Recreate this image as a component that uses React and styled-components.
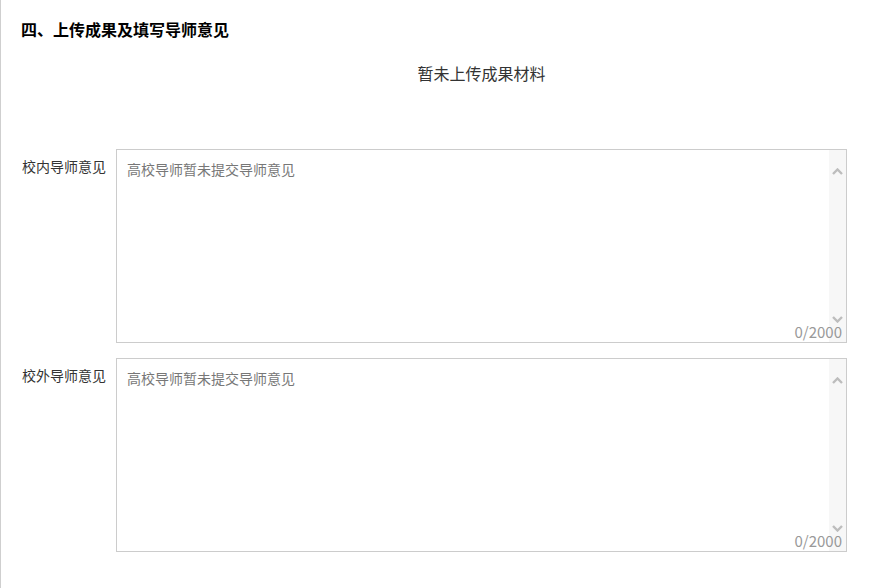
import styled, { createGlobalStyle } from "styled-components";

const GlobalStyle = createGlobalStyle`
  html, body {
    margin: 0;
    padding: 0;
    background: #fff;
  }
  body {
    font-family: "Microsoft YaHei", "Noto Sans CJK SC", "Noto Sans", sans-serif;
    color: #333;
  }
`;

const opinions = [
  { label: "校内导师意见", text: "高校导师暂未提交导师意见" },
  { label: "校外导师意见", text: "高校导师暂未提交导师意见" },
];

function Chevron({ down }) {
  return (
    <svg width="11" height="7" viewBox="0 0 11 7">
      <path
        d={down ? "M1 1 L5.5 5.5 L10 1" : "M1 6 L5.5 1.5 L10 6"}
        fill="none"
        stroke="#bdbdbd"
        strokeWidth="2.4"
      />
    </svg>
  );
}

function OpinionBox({ label, text }) {
  return (
    <FormRow>
      <Label>{label}</Label>
      <Box>
        <Placeholder>{text}</Placeholder>
        <ScrollTrack>
          <Chevron />
          <Chevron down />
        </ScrollTrack>
        <Counter>0/2000</Counter>
      </Box>
    </FormRow>
  );
}

export default function App() {
  return (
    <Page>
      <GlobalStyle />
      <Title>四、上传成果及填写导师意见</Title>
      <Empty>暂未上传成果材料</Empty>
      <Form>
        {opinions.map((o) => (
          <OpinionBox key={o.label} label={o.label} text={o.text} />
        ))}
      </Form>
    </Page>
  );
}

const Page = styled.div`
  min-height: 588px;
  box-sizing: border-box;
  border-left: 1px solid #cfcfcf;
  padding: 18px 42px 0 20px;
`;

const Title = styled.h3`
  margin: 0;
  font-size: 16px;
  line-height: 22px;
  font-weight: bold;
  color: #000;
`;

const Empty = styled.div`
  margin: 22px 0 0 95px;
  text-align: center;
  font-size: 16px;
  line-height: 22px;
  color: #333;
`;

const Form = styled.div`
  margin-top: 65px;
  display: flex;
  flex-direction: column;
  gap: 15px;
`;

const FormRow = styled.div`
  display: flex;
  align-items: flex-start;
`;

const Label = styled.div`
  width: 94px;
  flex-shrink: 0;
  padding: 7px 0 0 1px;
  font-size: 14px;
  line-height: 20px;
  color: #333;
`;

const Box = styled.div`
  position: relative;
  flex: 1;
  height: 194px;
  box-sizing: border-box;
  border: 1px solid #cccccc;
  display: flex;
`;

const Placeholder = styled.div`
  flex: 1;
  padding: 9px 10px;
  font-size: 14px;
  line-height: 20px;
  color: #777;
`;

const ScrollTrack = styled.div`
  width: 17px;
  background: #f7f7f7;
  display: flex;
  flex-direction: column;
  justify-content: space-between;
  align-items: center;
  padding: 18px 0 19px;
`;

const Counter = styled.span`
  position: absolute;
  right: 4px;
  bottom: 2px;
  font-size: 15px;
  line-height: 16px;
  color: #999;
`;
